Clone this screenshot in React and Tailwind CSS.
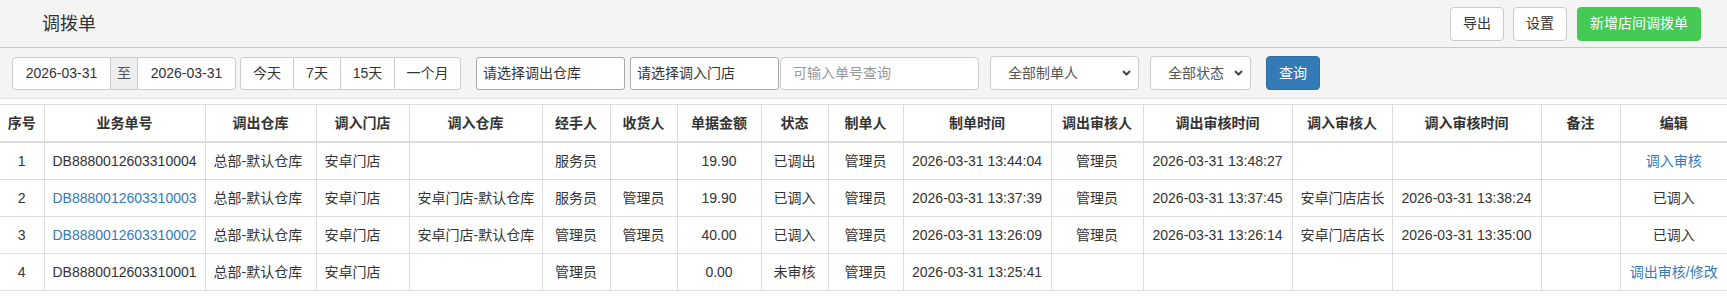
import React from "react";

const cols = [44, 161, 111, 93, 133, 68, 67, 84, 67, 75, 148, 92, 149, 100, 149, 79, 107];
const heads = ["序号", "业务单号", "调出仓库", "调入门店", "调入仓库", "经手人", "收货人", "单据金额", "状态", "制单人", "制单时间", "调出审核人", "调出审核时间", "调入审核人", "调入审核时间", "备注", "编辑"];
const leftCols = new Set([1, 2, 3, 4]);

const rows = [
  { no: "1", id: "DB8880012603310004", idLink: false, out: "总部-默认仓库", store: "安卓门店", inW: "", handler: "服务员", recv: "", amt: "19.90", st: "已调出", maker: "管理员", mt: "2026-03-31 13:44:04", oa: "管理员", ot: "2026-03-31 13:48:27", ia: "", it: "", note: "", edit: "调入审核", editLink: true },
  { no: "2", id: "DB8880012603310003", idLink: true, out: "总部-默认仓库", store: "安卓门店", inW: "安卓门店-默认仓库", handler: "服务员", recv: "管理员", amt: "19.90", st: "已调入", maker: "管理员", mt: "2026-03-31 13:37:39", oa: "管理员", ot: "2026-03-31 13:37:45", ia: "安卓门店店长", it: "2026-03-31 13:38:24", note: "", edit: "已调入", editLink: false },
  { no: "3", id: "DB8880012603310002", idLink: true, out: "总部-默认仓库", store: "安卓门店", inW: "安卓门店-默认仓库", handler: "管理员", recv: "管理员", amt: "40.00", st: "已调入", maker: "管理员", mt: "2026-03-31 13:26:09", oa: "管理员", ot: "2026-03-31 13:26:14", ia: "安卓门店店长", it: "2026-03-31 13:35:00", note: "", edit: "已调入", editLink: false },
  { no: "4", id: "DB8880012603310001", idLink: false, out: "总部-默认仓库", store: "安卓门店", inW: "", handler: "管理员", recv: "", amt: "0.00", st: "未审核", maker: "管理员", mt: "2026-03-31 13:25:41", oa: "", ot: "", ia: "", it: "", note: "", edit: "调出审核/修改", editLink: true },
];

function Chevron() {
  return (
    <svg width="9" height="6" viewBox="0 0 9 6" className="absolute right-[7px] top-1/2 -translate-y-1/2">
      <polyline points="1,1 4.5,4.5 8,1" fill="none" stroke="#444" strokeWidth="2" />
    </svg>
  );
}

function Select({ w, label }) {
  return (
    <div className={`relative h-[34px] ${w} bg-white border border-[#ccc] rounded-[4px] flex items-center pl-[17px] text-[14px] text-[#555]`}>
      {label}
      <Chevron />
    </div>
  );
}

export default function App() {
  const font = { fontFamily: '"Liberation Sans", Arial, "Noto Sans CJK SC", sans-serif' };
  return (
    <div className="w-[1727px] min-h-[305px] bg-white text-[#333] text-[14px]" style={font}>
      {/* top bar */}
      <div className="h-[48px] bg-[#f4f4f4] border-b border-[#c8c8c8] flex items-center pl-[42px] pr-[26px]">
        <div className="text-[18px] text-[#333] leading-none">调拨单</div>
        <div className="ml-auto flex items-center gap-[9px]">
          <button className="h-[34px] w-[54px] bg-white border border-[#ccc] rounded-[4px] text-[14px] text-[#333]">导出</button>
          <button className="h-[34px] w-[54px] bg-white border border-[#ccc] rounded-[4px] text-[14px] text-[#333]">设置</button>
          <button className="ml-[1px] h-[34px] w-[124px] bg-[#44c954] border border-[#44c954] rounded-[4px] text-[14px] text-white">新增店间调拨单</button>
        </div>
      </div>
      {/* filter bar */}
      <div className="h-[51px] bg-[#f4f4f4] border-b border-[#e3e3e3] flex items-center pl-[12px]">
        <div className="flex h-[33px]">
          <div className="w-[99px] bg-white border border-[#ccc] rounded-l-[4px] flex items-center justify-center">2026-03-31</div>
          <div className="w-[26px] bg-[#eee] border-y border-[#ccc] flex items-center justify-center text-[#555]">至</div>
          <div className="w-[99px] bg-white border border-[#ccc] rounded-r-[4px] flex items-center justify-center">2026-03-31</div>
        </div>
        <div className="ml-[4px] flex h-[33px]">
          <div className="w-[54px] bg-white border border-[#ccc] rounded-l-[4px] flex items-center justify-center">今天</div>
          <div className="w-[47px] bg-white border-y border-r border-[#ccc] flex items-center justify-center">7天</div>
          <div className="w-[54px] bg-white border-y border-r border-[#ccc] flex items-center justify-center">15天</div>
          <div className="w-[66px] bg-white border-y border-r border-[#ccc] rounded-r-[4px] flex items-center justify-center">一个月</div>
        </div>
        <div className="ml-[15px] w-[149px] h-[33px] bg-white border border-[#a9a9a9] rounded-[3px] flex items-center pl-[6px]">请选择调出仓库</div>
        <div className="ml-[5px] w-[149px] h-[33px] bg-white border border-[#a9a9a9] rounded-[3px] flex items-center pl-[6px]">请选择调入门店</div>
        <div className="ml-[1px] w-[199px] h-[33px] bg-white border border-[#ccc] rounded-[4px] flex items-center pl-[12px] text-[#999]">可输入单号查询</div>
        <div className="ml-[11px]"><Select w="w-[149px]" label="全部制单人" /></div>
        <div className="ml-[11px]"><Select w="w-[101px]" label="全部状态" /></div>
        <button className="ml-[15px] h-[34px] w-[54px] bg-[#337ab7] border border-[#2e6da4] rounded-[4px] text-white text-[14px]">查询</button>
      </div>
      {/* table */}
      <div className="pt-[5px]">
        <table className="table-fixed border-collapse w-[1727px]">
          <colgroup>
            {cols.map((w, i) => (
              <col key={i} style={{ width: w }} />
            ))}
          </colgroup>
          <thead>
            <tr>
              {heads.map((h, i) => (
                <th key={i} className="border border-[#ddd] border-b-2 px-2 py-2 leading-[20px] font-bold text-center text-[#333] whitespace-nowrap first:px-1 first:border-l-0 last:border-r-0">
                  {h}
                </th>
              ))}
            </tr>
          </thead>
          <tbody>
            {rows.map((r, ri) => {
              const vals = [r.no, r.id, r.out, r.store, r.inW, r.handler, r.recv, r.amt, r.st, r.maker, r.mt, r.oa, r.ot, r.ia, r.it, r.note, r.edit];
              return (
                <tr key={ri}>
                  {vals.map((v, ci) => {
                    const link = (ci === 1 && r.idLink) || (ci === 16 && r.editLink);
                    return (
                      <td
                        key={ci}
                        className={`border border-[#ddd] px-2 py-2 leading-[20px] whitespace-nowrap first:border-l-0 last:border-r-0 ${leftCols.has(ci) ? "text-left" : "text-center"} ${link ? "text-[#337ab7]" : "text-[#333]"}`}
                      >
                        {v}
                      </td>
                    );
                  })}
                </tr>
              );
            })}
          </tbody>
        </table>
      </div>
    </div>
  );
}
